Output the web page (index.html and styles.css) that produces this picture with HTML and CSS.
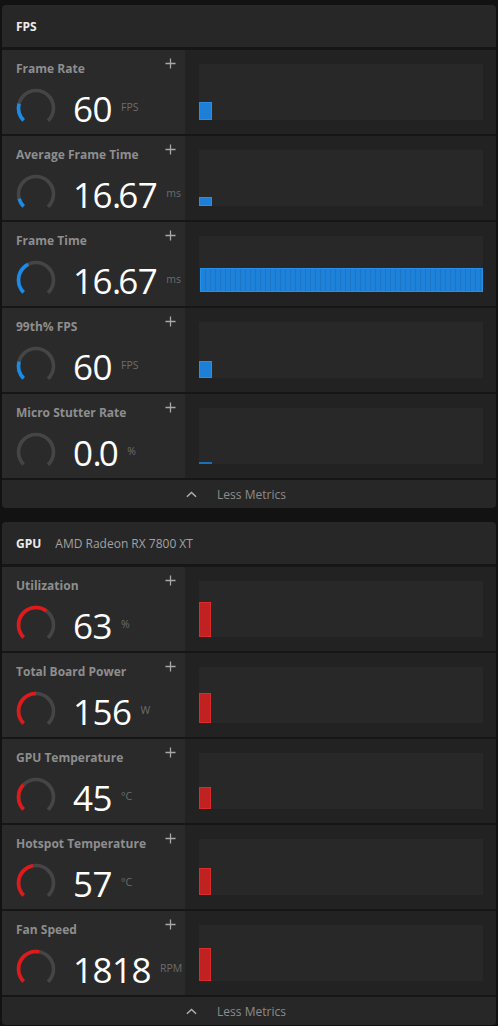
FILE: index.html
```html
<!DOCTYPE html>
<html lang="en">
<head>
    <meta charset="UTF-8">
    <title>Metrics</title>
    <link rel="stylesheet" href="styles.css">
</head>
<body>
    <section class="panel">
        <header class="panel-head"><span class="head-title">FPS</span></header>
        <div class="rows">
            <div class="metric">
                <div class="info">
                    <div class="info-top"><span class="label">Frame Rate</span><svg class="plus" viewBox="0 0 12 12"><path d="M6 0.5V11.5M0.5 6H11.5"/></svg></div>
                    <div class="reading">
                        <svg class="gauge" viewBox="0 0 40 40"><circle class="track" cx="20" cy="20" r="17.5"/><circle class="fill blue" cx="20" cy="20" r="17.5" stroke-dasharray="18 200"/></svg>
                        <span class="value">60</span><span class="unit">FPS</span>
                    </div>
                </div>
                <div class="graph"><div class="chart"><div class="bar blue" style="height: 18px"></div></div></div>
            </div>
            <div class="metric">
                <div class="info">
                    <div class="info-top"><span class="label">Average Frame Time</span><svg class="plus" viewBox="0 0 12 12"><path d="M6 0.5V11.5M0.5 6H11.5"/></svg></div>
                    <div class="reading">
                        <svg class="gauge" viewBox="0 0 40 40"><circle class="track" cx="20" cy="20" r="17.5"/><circle class="fill blue" cx="20" cy="20" r="17.5" stroke-dasharray="9 200"/></svg>
                        <span class="value">16<span class="dot">.</span>67</span><span class="unit">ms</span>
                    </div>
                </div>
                <div class="graph"><div class="chart"><div class="bar blue" style="height: 9px"></div></div></div>
            </div>
            <div class="metric">
                <div class="info">
                    <div class="info-top"><span class="label">Frame Time</span><svg class="plus" viewBox="0 0 12 12"><path d="M6 0.5V11.5M0.5 6H11.5"/></svg></div>
                    <div class="reading">
                        <svg class="gauge" viewBox="0 0 40 40"><circle class="track" cx="20" cy="20" r="17.5"/><circle class="fill blue" cx="20" cy="20" r="17.5" stroke-dasharray="33 200"/></svg>
                        <span class="value">16<span class="dot">.</span>67</span><span class="unit">ms</span>
                    </div>
                </div>
                <div class="graph"><div class="chart"><div class="bar blue wide" style="height: 24px"></div></div></div>
            </div>
            <div class="metric">
                <div class="info">
                    <div class="info-top"><span class="label">99th% FPS</span><svg class="plus" viewBox="0 0 12 12"><path d="M6 0.5V11.5M0.5 6H11.5"/></svg></div>
                    <div class="reading">
                        <svg class="gauge" viewBox="0 0 40 40"><circle class="track" cx="20" cy="20" r="17.5"/><circle class="fill blue" cx="20" cy="20" r="17.5" stroke-dasharray="18 200"/></svg>
                        <span class="value">60</span><span class="unit">FPS</span>
                    </div>
                </div>
                <div class="graph"><div class="chart"><div class="bar blue" style="height: 17px"></div></div></div>
            </div>
            <div class="metric">
                <div class="info">
                    <div class="info-top"><span class="label">Micro Stutter Rate</span><svg class="plus" viewBox="0 0 12 12"><path d="M6 0.5V11.5M0.5 6H11.5"/></svg></div>
                    <div class="reading">
                        <svg class="gauge" viewBox="0 0 40 40"><circle class="track" cx="20" cy="20" r="17.5"/></svg>
                        <span class="value">0<span class="dot">.</span>0</span><span class="unit">%</span>
                    </div>
                </div>
                <div class="graph"><div class="chart"><div class="bar blue flat" style="height: 2px"></div></div></div>
            </div>
            <div class="less">
                <svg class="chevron" viewBox="0 0 12 7"><path d="M1 6L6 1.3L11 6"/></svg>
                <span>Less Metrics</span>
            </div>
        </div>
    </section>

    <section class="panel">
        <header class="panel-head"><span class="head-title">GPU</span><span class="head-sub">AMD Radeon RX 7800 XT</span></header>
        <div class="rows">
            <div class="metric">
                <div class="info">
                    <div class="info-top"><span class="label">Utilization</span><svg class="plus" viewBox="0 0 12 12"><path d="M6 0.5V11.5M0.5 6H11.5"/></svg></div>
                    <div class="reading">
                        <svg class="gauge" viewBox="0 0 40 40"><circle class="track" cx="20" cy="20" r="17.5"/><circle class="fill red" cx="20" cy="20" r="17.5" stroke-dasharray="52 200"/></svg>
                        <span class="value">63</span><span class="unit">%</span>
                    </div>
                </div>
                <div class="graph"><div class="chart"><div class="bar red" style="height: 35px"></div></div></div>
            </div>
            <div class="metric">
                <div class="info">
                    <div class="info-top"><span class="label">Total Board Power</span><svg class="plus" viewBox="0 0 12 12"><path d="M6 0.5V11.5M0.5 6H11.5"/></svg></div>
                    <div class="reading">
                        <svg class="gauge" viewBox="0 0 40 40"><circle class="track" cx="20" cy="20" r="17.5"/><circle class="fill red" cx="20" cy="20" r="17.5" stroke-dasharray="41 200"/></svg>
                        <span class="value">156</span><span class="unit">W</span>
                    </div>
                </div>
                <div class="graph"><div class="chart"><div class="bar red" style="height: 30px"></div></div></div>
            </div>
            <div class="metric">
                <div class="info">
                    <div class="info-top"><span class="label">GPU Temperature</span><svg class="plus" viewBox="0 0 12 12"><path d="M6 0.5V11.5M0.5 6H11.5"/></svg></div>
                    <div class="reading">
                        <svg class="gauge" viewBox="0 0 40 40"><circle class="track" cx="20" cy="20" r="17.5"/><circle class="fill red" cx="20" cy="20" r="17.5" stroke-dasharray="27 200"/></svg>
                        <span class="value">45</span><span class="unit">°C</span>
                    </div>
                </div>
                <div class="graph"><div class="chart"><div class="bar red" style="height: 22px"></div></div></div>
            </div>
            <div class="metric">
                <div class="info">
                    <div class="info-top"><span class="label">Hotspot Temperature</span><svg class="plus" viewBox="0 0 12 12"><path d="M6 0.5V11.5M0.5 6H11.5"/></svg></div>
                    <div class="reading">
                        <svg class="gauge" viewBox="0 0 40 40"><circle class="track" cx="20" cy="20" r="17.5"/><circle class="fill red" cx="20" cy="20" r="17.5" stroke-dasharray="38 200"/></svg>
                        <span class="value">57</span><span class="unit">°C</span>
                    </div>
                </div>
                <div class="graph"><div class="chart"><div class="bar red" style="height: 27px"></div></div></div>
            </div>
            <div class="metric">
                <div class="info">
                    <div class="info-top"><span class="label">Fan Speed</span><svg class="plus" viewBox="0 0 12 12"><path d="M6 0.5V11.5M0.5 6H11.5"/></svg></div>
                    <div class="reading">
                        <svg class="gauge" viewBox="0 0 40 40"><circle class="track" cx="20" cy="20" r="17.5"/><circle class="fill red" cx="20" cy="20" r="17.5" stroke-dasharray="44 200"/></svg>
                        <span class="value">1818</span><span class="unit">RPM</span>
                    </div>
                </div>
                <div class="graph"><div class="chart"><div class="bar red" style="height: 33px"></div></div></div>
            </div>
            <div class="less">
                <svg class="chevron" viewBox="0 0 12 7"><path d="M1 6L6 1.3L11 6"/></svg>
                <span>Less Metrics</span>
            </div>
        </div>
    </section>
</body>
</html>
```

FILE: styles.css
```css
body {
    margin: 0;
    padding: 5px 2px 0;
    background-color: #121212;
    font-family: "Open Sans", "Noto Sans", Arial, sans-serif;
    color: #e6e6e6;
}

.panel {
    background-color: #161616;
    border-radius: 4px;
    overflow: hidden;
    margin-bottom: 14px;
}

.panel-head {
    height: 42px;
    display: flex;
    align-items: center;
    gap: 14px;
    padding-left: 14px;
    background-color: #272727;
    margin-bottom: 3px;
}

.head-title {
    font-size: 12px;
    font-weight: 700;
    color: #ececec;
}

.head-sub {
    font-size: 12px;
    color: #a2a2a2;
}

.rows {
    display: flex;
    flex-direction: column;
    gap: 2px;
}

.metric {
    display: grid;
    grid-template-columns: 183px 1fr;
    height: 84px;
}

.info {
    background-color: #2a2a2a;
    padding: 8px 9px 0 14px;
}

.info-top {
    display: flex;
    justify-content: space-between;
    align-items: center;
    height: 20px;
}

.label {
    font-size: 12px;
    font-weight: 700;
    color: #8e8e8e;
}

.plus {
    width: 11px;
    height: 11px;
    margin-top: -10px;
    fill: none;
    stroke: #a8a8a8;
    stroke-width: 1.4;
}

.reading {
    display: flex;
    align-items: center;
    margin-top: 9px;
}

.gauge {
    width: 40px;
    height: 40px;
    flex: none;
    margin-right: 17px;
    transform: rotate(135deg);
}

.gauge circle {
    fill: none;
    stroke-width: 3.6;
}

.gauge .track {
    stroke: #454545;
    stroke-dasharray: 82.5 200;
}

.gauge .fill.blue {
    stroke: #1b8be8;
}

.gauge .fill.red {
    stroke: #e0191b;
}

.value {
    font-size: 35px;
    line-height: 40px;
    color: #ffffff;
    letter-spacing: -0.5px;
    padding-top: 2px;
}

.dot {
    letter-spacing: -3px;
}

.unit {
    font-size: 10.5px;
    color: #6c6c6c;
    margin-left: 9px;
    padding-bottom: 3px;
}

.graph {
    background-color: #222222;
    padding: 14px 13px 14px 14px;
}

.chart {
    height: 56px;
    background-color: #282828;
    display: flex;
    align-items: flex-end;
}

.bar {
    width: 13px;
    box-sizing: border-box;
}

.bar.blue {
    background-color: #1e7fd6;
    border: 1px solid #2690ea;
}

.bar.red {
    width: 12px;
    background-color: #c02222;
    border: 1px solid #dd2a2a;
}

.bar.wide {
    width: 100%;
    margin-left: 1px;
    background-image: repeating-linear-gradient(90deg, #1e82da 0 4px, #1b76c6 4px 5px);
}

.bar.flat {
    border: none;
    background-color: #1b6fb8;
}

.less {
    height: 28px;
    background-color: #272727;
    display: flex;
    align-items: center;
    justify-content: center;
    gap: 20px;
    padding-right: 26px;
    font-size: 12px;
    color: #8c8c8c;
}

.chevron {
    width: 11px;
    height: 7px;
    fill: none;
    stroke: #b0b0b0;
    stroke-width: 1.6;
}
```
